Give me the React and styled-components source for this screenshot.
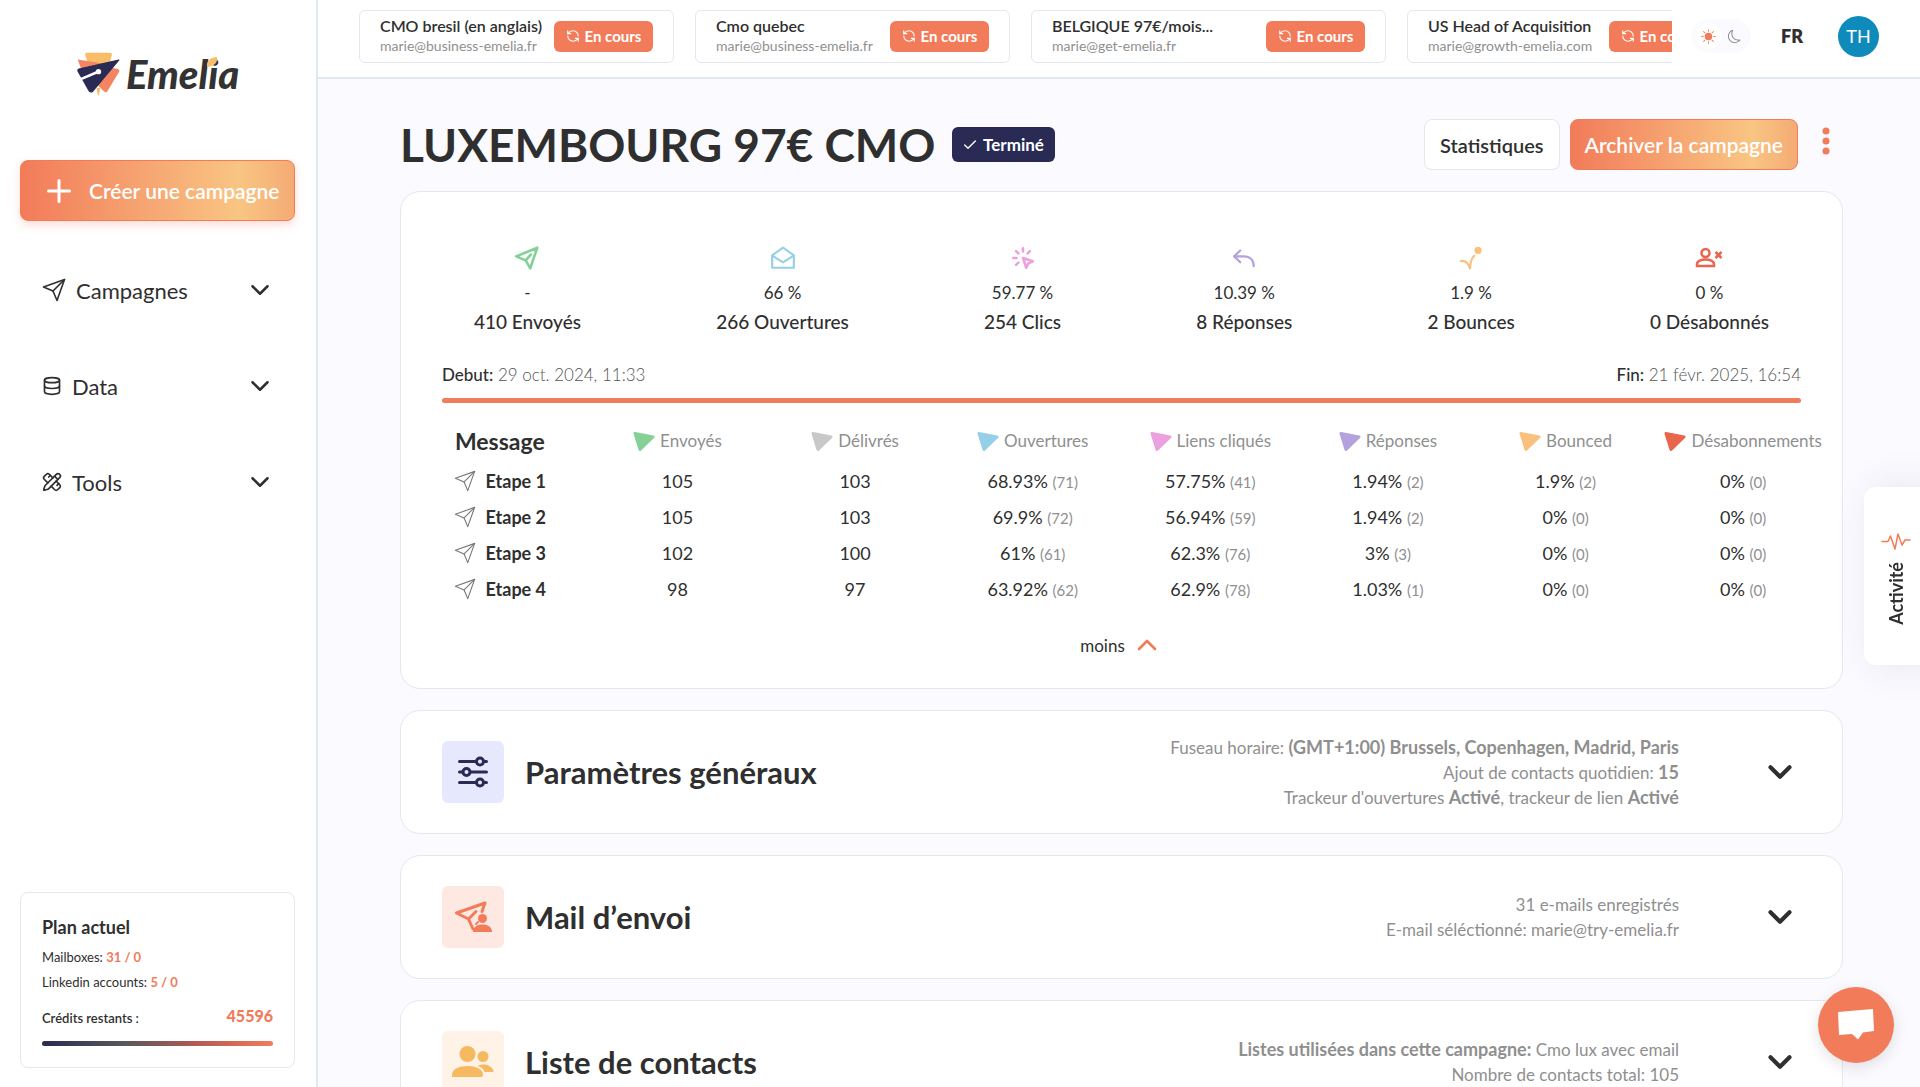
import React from "react";
import styled, { createGlobalStyle } from "styled-components";
import { LuCheck, LuChevronDown, LuChevronUp, LuDatabase, LuPencilRuler, LuPlus, LuRefreshCcw } from "react-icons/lu";
import { TbClick } from "react-icons/tb";
import { BsMoon, BsSunFill } from "react-icons/bs";

const colors = {
  orange: "#f27b5a",
  navy: "#292b54",
  text: "#2f2f2f",
  grey: "#8f8f8f",
  border: "#e2e8f0",
  background: "#fafaff",
};

const GlobalStyle = createGlobalStyle`
  * {
    box-sizing: border-box;
  }

  body {
    margin: 0;
    color: ${colors.text};
    background: ${colors.background};
    font-family: Lato, "Open Sans", sans-serif;
  }

  button {
    font-family: inherit;
    color: inherit;
    cursor: pointer;
  }

  h1, h2, p {
    margin: 0;
  }

  svg {
    display: block;
    flex-shrink: 0;
  }
`;

const Layout = styled.div`
  display: flex;
  height: 100vh;
  overflow: hidden;
`;

/* Sidebar */

const Sidebar = styled.aside`
  display: flex;
  flex-direction: column;
  flex-shrink: 0;
  width: 318px;
  padding: 46px 21px 19px 20px;
  background: white;
  border-right: 2px solid ${colors.border};
`;

const Brand = styled.a`
  display: flex;
  align-items: center;
  gap: 6px;
  height: 56px;
  padding-left: 57px;
  color: #333;
  text-decoration: none;
`;

const BrandName = styled.span`
  position: relative;
  font-size: 40px;
  line-height: 56px;
  font-weight: 900;
  font-style: italic;
`;

const Leaf = styled.svg`
  position: absolute;
  top: 10px;
  right: 21px;
`;

const PrimaryButton = styled.button`
  display: flex;
  align-items: center;
  color: white;
  font-weight: 600;
  border: 1px solid ${colors.orange};
  border-radius: 8px;
  background: linear-gradient(90deg, #f27b5a 0%, #f9c583 80%, #f4ab74 100%);
`;

const CreateButton = styled(PrimaryButton)`
  gap: 12px;
  height: 61px;
  margin-top: 58px;
  padding: 0 16px 0 20px;
  font-size: 21px;
  white-space: nowrap;
  box-shadow: 0 4px 8px rgba(242, 123, 90, 0.25);
`;

const Nav = styled.nav`
  display: flex;
  flex-direction: column;
  gap: 48px;
  margin-top: 45px;
`;

const NavItem = styled.button`
  display: flex;
  align-items: center;
  gap: 10px;
  height: 48px;
  padding: 0 20px 0 22px;
  font-size: 22px;
  text-align: left;
  border: none;
  background: none;
`;

const NavLabel = styled.span`
  flex: 1;
`;

const Plan = styled.section`
  margin-top: auto;
  padding: 22px 21px 20px;
  border: 1px solid ${colors.border};
  border-radius: 8px;
`;

const PlanTitle = styled.h2`
  margin-bottom: 6px;
  font-size: 18px;
  line-height: 24px;
  font-weight: 700;
`;

const PlanLine = styled.p`
  font-size: 13px;
  line-height: 25px;

  strong {
    color: ${colors.orange};
  }
`;

const Credits = styled.div`
  display: flex;
  justify-content: space-between;
  margin-top: 9px;
  font-size: 13px;
  line-height: 28px;
  font-weight: 600;

  strong {
    color: ${colors.orange};
    font-size: 16px;
    line-height: 24px;
  }
`;

const CreditsBar = styled.div`
  height: 5px;
  margin-top: 9px;
  margin-bottom: 1px;
  border-radius: 3px;
  background: linear-gradient(90deg, ${colors.navy}, #58565b 35%, #ad5a54 65%, ${colors.orange});
`;

/* Top bar */

const Content = styled.div`
  display: flex;
  flex: 1;
  flex-direction: column;
  min-width: 0;
`;

const Header = styled.header`
  display: flex;
  align-items: center;
  flex-shrink: 0;
  height: 79px;
  padding: 0 41px 5px;
  background: white;
  border-bottom: 2px solid ${colors.border};
`;

const CampaignList = styled.div`
  display: flex;
  flex: 1;
  gap: 21px;
  min-width: 0;
  overflow: hidden;
`;

const CampaignCard = styled.article`
  display: flex;
  align-items: center;
  flex-shrink: 0;
  gap: 10px;
  height: 53px;
  padding: 0 20px;
  border: 1px solid ${colors.border};
  border-radius: 6px;
`;

const CampaignText = styled.div`
  width: ${(props) => props.$width}px;
  line-height: 20px;
  white-space: nowrap;
`;

const CampaignName = styled.p`
  font-size: 16px;
  font-weight: 600;
`;

const CampaignMail = styled.p`
  color: ${colors.grey};
  font-size: 14px;
`;

const Badge = styled.span`
  display: inline-flex;
  align-items: center;
  justify-content: center;
  gap: 5px;
  width: 99px;
  height: 31px;
  color: white;
  font-size: 15px;
  font-weight: 700;
  border-radius: 6px;
  background: ${colors.orange};
`;

const DoneBadge = styled(Badge)`
  width: 103px;
  height: 35px;
  font-size: 17px;
  background: ${colors.navy};
`;

const ThemeSwitch = styled.button`
  display: flex;
  align-items: center;
  width: 59px;
  height: 34px;
  margin-left: 20px;
  padding: 4px;
  color: #777;
  border: none;
  border-radius: 17px;
  background: ${colors.background};
`;

const ThemeOption = styled.span`
  display: flex;
  align-items: center;
  justify-content: center;
  width: 26px;
  height: 26px;
  color: ${(props) => (props.$active ? colors.orange : "inherit")};
  border-radius: 50%;
  background: ${(props) => (props.$active ? "white" : "none")};
`;

const Language = styled.button`
  margin: 0 35px 0 30px;
  padding: 0;
  font-size: 18px;
  font-weight: 800;
  border: none;
  background: none;
`;

const Avatar = styled.button`
  width: 41px;
  height: 41px;
  padding: 0;
  color: white;
  font-size: 18px;
  border: none;
  border-radius: 50%;
  background: #0f8bbb;
`;

/* Campaign page */

const Main = styled.main`
  flex: 1;
  padding: 40px 77px 40px 82px;
  overflow-y: auto;
  scrollbar-width: none;
`;

const TitleRow = styled.div`
  display: flex;
  align-items: center;
  height: 51px;
`;

const Title = styled.h1`
  margin-right: 16px;
  font-size: 46px;
  line-height: 51px;
  font-weight: 700;
`;

const Actions = styled.div`
  display: flex;
  gap: 10px;
  margin-left: auto;
`;

const StatsButton = styled.button`
  height: 51px;
  padding: 0 15px;
  font-size: 20px;
  font-weight: 600;
  border: 1px solid ${colors.border};
  border-radius: 8px;
  background: white;
`;

const ArchiveButton = styled(PrimaryButton)`
  height: 51px;
  padding: 0 14px;
  font-size: 21px;
`;

const MenuButton = styled.button`
  width: 35px;
  height: 44px;
  padding: 0 0 0 14px;
  border: none;
  background: none;
`;

const Card = styled.section`
  margin-top: 21px;
  border: 1px solid ${colors.border};
  border-radius: 20px;
  background: white;
`;

const StatsCard = styled(Card)`
  padding: 53px 10px 31px;
`;

const StatList = styled.div`
  display: flex;
  justify-content: space-between;
  padding: 0 63px;
`;

const Stat = styled.div`
  display: flex;
  flex-direction: column;
  align-items: center;
`;

const StatRate = styled.p`
  margin: 10px 0 2px;
  font-size: 17px;
  line-height: 24px;
`;

const StatLabel = styled.p`
  font-size: 19px;
  line-height: 30px;
  font-weight: 500;
`;

const Dates = styled.div`
  display: flex;
  justify-content: space-between;
  margin: 26px 31px 11px;
  color: #555;
  font-size: 17px;
  line-height: 24px;
  font-weight: 300;

  strong {
    color: ${colors.text};
    font-weight: 500;
  }
`;

const Progress = styled.div`
  height: 5px;
  margin: 0 31px 15px;
  border-radius: 3px;
  background: ${colors.orange};
`;

const Steps = styled.table`
  width: 100%;
  table-layout: fixed;
  border-collapse: collapse;
  font-size: 18px;
  text-align: center;

  th,
  td {
    height: 36px;
    padding: 0;
  }
`;

const StepsHead = styled.th`
  && {
    height: 45px;
  }

  color: ${(props) => (props.$main ? colors.text : colors.grey)};
  font-size: ${(props) => (props.$main ? 23 : 17)}px;
  font-weight: ${(props) => (props.$main ? 700 : 400)};
`;

const CellContent = styled.span`
  display: flex;
  align-items: center;
  justify-content: center;
  gap: ${(props) => props.$gap}px;
  white-space: nowrap;
`;

const Count = styled.span`
  color: ${colors.grey};
  font-size: 15px;
`;

const LessButton = styled.button`
  display: flex;
  align-items: center;
  gap: 6px;
  height: 24px;
  margin: 26px auto 0;
  padding: 0;
  font-size: 17px;
  border: none;
  background: none;
`;

const Panel = styled(Card)`
  display: flex;
  align-items: center;
  min-height: 124px;
  padding: 0 45px 0 41px;
`;

const PanelIcon = styled.div`
  display: flex;
  align-items: center;
  justify-content: center;
  width: 62px;
  height: 62px;
  margin-right: 21px;
  border-radius: 6px;
  background: ${(props) => props.$background};
`;

const PanelTitle = styled.h2`
  font-size: 31px;
  line-height: 40px;
  font-weight: 700;
`;

const PanelInfo = styled.div`
  flex: 1;
  color: ${colors.grey};
  font-size: 17px;
  line-height: 25px;
  text-align: right;

  strong {
    font-size: 18px;
  }
`;

const PanelToggle = styled.button`
  display: flex;
  align-items: center;
  justify-content: center;
  width: 34px;
  height: 34px;
  margin-left: 84px;
  padding: 0;
  border: none;
  background: none;
`;

/* Floating items */

const ActivityTab = styled.button`
  position: fixed;
  top: 487px;
  right: 0;
  display: flex;
  flex-direction: column;
  align-items: center;
  justify-content: center;
  gap: 12px;
  width: 56px;
  height: 178px;
  padding: 6px 0 0 8px;
  font-size: 18px;
  font-weight: 700;
  border: none;
  border-radius: 12px 0 0 12px;
  background: white;
  box-shadow: 10px 0 40px rgba(60, 60, 110, 0.12);
`;

const ActivityLabel = styled.span`
  writing-mode: vertical-rl;
  transform: rotate(180deg);
`;

const ChatButton = styled.button`
  position: fixed;
  right: 26px;
  bottom: 24px;
  display: flex;
  align-items: center;
  justify-content: center;
  width: 76px;
  height: 76px;
  padding: 0;
  border: none;
  border-radius: 50%;
  background: ${colors.orange};
  box-shadow: 0 4px 16px rgba(0, 0, 0, 0.12);
`;

/* Icons */

const LineIcon = ({ size = 24, color = "currentColor", width = 2, children }) => (
  <svg
    width={size}
    height={size}
    viewBox="0 0 24 24"
    fill="none"
    stroke={color}
    strokeWidth={width}
    strokeLinecap="round"
    strokeLinejoin="round"
  >
    {children}
  </svg>
);

const PlaneIcon = (props) => (
  <LineIcon {...props}>
    <path d="M1.5 9 22.5 1.5 15 22.5 11 13Z" />
    <path d="M11 13 22.5 1.5" />
  </LineIcon>
);

const SentIcon = () => (
  <LineIcon size={26} color="#83d195" width={2.4}>
    <path d="M2 10.5 21.5 2.500 15 21.500 10.8 14.2Z" />
    <path d="M10.8 14.2 15.5 8.8" />
  </LineIcon>
);

const OpenIcon = () => (
  <LineIcon size={26} color="#96d0e8" width={2}>
    <path d="M2 9.500 12 2.500l10 7V21H2Z" />
    <path d="m2.500 10 9.500 6 9.500-6" />
  </LineIcon>
);

const ReplyIcon = () => (
  <LineIcon size={26} color="#b3a2dc" width={2}>
    <path d="M8.500 5 3 10.500l5.500 5.500" />
    <path d="M3 10.500h9c5.500 0 9 3.500 9 9" />
  </LineIcon>
);

const BounceIcon = () => (
  <LineIcon size={26} color="#fac07d" width={2}>
    <path d="M2.500 15c3.500-1 6.500 1 8.500 6.500 .300-5 1.500-9 4-11.500" />
    <circle cx="18.500" cy="5" r="2.300" fill="#fac07d" />
  </LineIcon>
);

const UnsubscribeIcon = () => (
  <svg width="28" height="26" viewBox="0 0 28 26" fill="none" stroke="#e9654b" strokeWidth="2.500">
    <circle cx="10.500" cy="8" r="4" />
    <path d="M2 21v-2c0-3 4.500-4.500 8.500-4.500S19 16 19 19v2Z" />
    <path d="m20.500 7 6 6m0-6-6 6" />
  </svg>
);

const Marker = ({ color }) => (
  <svg width="22" height="20" viewBox="0 0 22 20">
    <path
      d="M2 2.500 20 6 7 18.500Z"
      fill={color}
      stroke={color}
      strokeWidth="3"
      strokeLinejoin="round"
    />
  </svg>
);

const SettingsIcon = () => (
  <svg width="32" height="32" viewBox="0 0 32 32" fill="#e6e9fe" stroke={colors.navy} strokeWidth="3" strokeLinecap="round">
    <path d="M2.500 5.500h27M2.500 16h27M2.500 26.500h27" />
    <circle cx="23" cy="5.500" r="3.500" />
    <circle cx="9.500" cy="16" r="3.500" />
    <circle cx="23" cy="26.500" r="3.500" />
  </svg>
);

const SenderIcon = () => (
  <svg width="38" height="34" viewBox="0 0 38 34" fill="none" stroke={colors.orange} strokeWidth="3" strokeLinecap="round" strokeLinejoin="round">
    <path d="M28 11.500 31 3 2.500 13l12 6 4.500 10" />
    <path d="m14.500 19 7.500-7.500" />
    <circle cx="28.500" cy="18.500" r="4.500" fill={colors.orange} stroke="none" />
    <path d="M19 32c0-5 4-7.500 9.500-7.500S38 27 38 32Z" fill={colors.orange} stroke="none" />
    <path d="m22 24 2-2" strokeWidth="2" />
  </svg>
);

const ContactsIcon = () => (
  <svg width="42" height="32" viewBox="0 0 42 32" fill="#f7b960">
    <circle cx="15.500" cy="8" r="8" />
    <path d="M0 31v-2c0-6 7-9 15.500-9S31 23 31 29v1l-2 1Z" />
    <circle cx="31" cy="10.500" r="5.500" />
    <path d="M26 20c3-2 9-2 12 .500 2.500 1.500 3.500 3 3.500 5.500h-9c-1-3-3-4.800-6.500-6Z" />
  </svg>
);

const PulseIcon = () => (
  <svg width="30" height="17" viewBox="0 0 30 17" fill="none" stroke={colors.orange} strokeWidth="1.500" strokeLinecap="round" strokeLinejoin="round">
    <path d="M1 8.500h6L9.500 3l4.500 13L17 1l4 11 3-5h5" />
  </svg>
);

const BrandMark = () => (
  <svg width="43" height="44" viewBox="232 164 130 132">
    <path d="M262 166h70q7 0 5 7l-8 30h-62l-10-29q-2-8 5-8Z" fill="#f9bd68" />
    <path d="m234 186 76 12-64 20Z" fill="#f58562" />
    <path d="m338 211 17 4q7 2 4 9l-35 58q-4 6-10 1l-20-20Z" fill="#f58562" />
    <path d="M291 272h12l-5 22h-3Z" fill="#f9bd68" />
    <path
      d="M358 188 238 215q-4 2-3 6l34 60q5 6 10 1Z"
      fill="#292b54"
      stroke="#292b54"
      strokeWidth="4"
      strokeLinejoin="round"
    />
    <path d="m240 247 56-24" stroke="white" strokeWidth="8" />
    <circle cx="297" cy="223" r="8" fill="white" />
  </svg>
);

/* Data */

const navItems = [
  { label: "Campagnes", icon: <PlaneIcon size={24} width={1.6} /> },
  { label: "Data", icon: <LuDatabase size={20} /> },
  { label: "Tools", icon: <LuPencilRuler size={20} /> },
];

const campaigns = [
  { name: "CMO bresil (en anglais)", mail: "marie@business-emelia.fr", width: 164 },
  { name: "Cmo quebec", mail: "marie@business-emelia.fr", width: 164 },
  { name: "BELGIQUE 97€/mois...", mail: "marie@get-emelia.fr", width: 204 },
  { name: "US Head of Acquisition", mail: "marie@growth-emelia.com", width: 171 },
];

const stats = [
  { icon: <SentIcon />, rate: "-", label: "410 Envoyés" },
  { icon: <OpenIcon />, rate: "66 %", label: "266 Ouvertures" },
  { icon: <TbClick size={26} color="#eca1df" strokeWidth={2.4} />, rate: "59.77 %", label: "254 Clics" },
  { icon: <ReplyIcon />, rate: "10.39 %", label: "8 Réponses" },
  { icon: <BounceIcon />, rate: "1.9 %", label: "2 Bounces" },
  { icon: <UnsubscribeIcon />, rate: "0 %", label: "0 Désabonnés" },
];

const columns = [
  { label: "Envoyés", color: "#83d195" },
  { label: "Délivrés", color: "#c8c8c8" },
  { label: "Ouvertures", color: "#96d0e8" },
  { label: "Liens cliqués", color: "#eca1df" },
  { label: "Réponses", color: "#b3a2dc" },
  { label: "Bounced", color: "#fac07d" },
  { label: "Désabonnements", color: "#e9654b" },
];

const steps = [
  [["105"], ["103"], ["68.93%", 71], ["57.75%", 41], ["1.94%", 2], ["1.9%", 2], ["0%", 0]],
  [["105"], ["103"], ["69.9%", 72], ["56.94%", 59], ["1.94%", 2], ["0%", 0], ["0%", 0]],
  [["102"], ["100"], ["61%", 61], ["62.3%", 76], ["3%", 3], ["0%", 0], ["0%", 0]],
  [["98"], ["97"], ["63.92%", 62], ["62.9%", 78], ["1.03%", 1], ["0%", 0], ["0%", 0]],
];

const panels = [
  {
    title: "Paramètres généraux",
    icon: <SettingsIcon />,
    background: "#e6e9fe",
    info: (
      <>
        <p>Fuseau horaire: <strong>(GMT+1:00) Brussels, Copenhagen, Madrid, Paris</strong></p>
        <p>Ajout de contacts quotidien: <strong>15</strong></p>
        <p>Trackeur d'ouvertures <strong>Activé</strong>, trackeur de lien <strong>Activé</strong></p>
      </>
    ),
  },
  {
    title: "Mail d’envoi",
    icon: <SenderIcon />,
    background: "#fee8e2",
    info: (
      <>
        <p>31 e-mails enregistrés</p>
        <p>E-mail séléctionné: marie@try-emelia.fr</p>
      </>
    ),
  },
  {
    title: "Liste de contacts",
    icon: <ContactsIcon />,
    background: "#fff2e6",
    info: (
      <>
        <p><strong>Listes utilisées dans cette campagne:</strong> Cmo lux avec email</p>
        <p>Nombre de contacts total: 105</p>
      </>
    ),
  },
];

const App = () => (
  <>
    <GlobalStyle />
    <Layout>
      <Sidebar>
        <Brand href="#">
          <BrandMark />
          <BrandName>
            Emelia
            <Leaf width="12" height="12" viewBox="0 0 12 12">
              <path d="M1 11C0 5 5 1 11 1c1 6-3 9-10 10Z" fill="#f9bd68" />
            </Leaf>
          </BrandName>
        </Brand>
        <CreateButton>
          <LuPlus size={36} strokeWidth={2} />
          Créer une campagne
        </CreateButton>
        <Nav>
          {navItems.map((item) => (
            <NavItem key={item.label}>
              {item.icon}
              <NavLabel>{item.label}</NavLabel>
              <LuChevronDown size={30} />
            </NavItem>
          ))}
        </Nav>
        <Plan>
          <PlanTitle>Plan actuel</PlanTitle>
          <PlanLine>Mailboxes: <strong>31 / 0</strong></PlanLine>
          <PlanLine>Linkedin accounts: <strong>5 / 0</strong></PlanLine>
          <Credits>
            <span>Crédits restants :</span>
            <strong>45596</strong>
          </Credits>
          <CreditsBar />
        </Plan>
      </Sidebar>

      <Content>
        <Header>
          <CampaignList>
            {campaigns.map((campaign) => (
              <CampaignCard key={campaign.name}>
                <CampaignText $width={campaign.width}>
                  <CampaignName>{campaign.name}</CampaignName>
                  <CampaignMail>{campaign.mail}</CampaignMail>
                </CampaignText>
                <Badge>
                  <LuRefreshCcw size={14} />
                  En cours
                </Badge>
              </CampaignCard>
            ))}
          </CampaignList>
          <ThemeSwitch aria-label="Thème">
            <ThemeOption $active>
              <BsSunFill size={15} />
            </ThemeOption>
            <ThemeOption>
              <BsMoon size={13} />
            </ThemeOption>
          </ThemeSwitch>
          <Language>FR</Language>
          <Avatar>TH</Avatar>
        </Header>

        <Main>
          <TitleRow>
            <Title>LUXEMBOURG 97€ CMO</Title>
            <DoneBadge>
              <LuCheck size={16} />
              Terminé
            </DoneBadge>
            <Actions>
              <StatsButton>Statistiques</StatsButton>
              <ArchiveButton>Archiver la campagne</ArchiveButton>
              <MenuButton aria-label="Menu">
                <svg width="8" height="28" viewBox="0 0 8 28" fill={colors.orange}>
                  <circle cx="4" cy="4" r="3.500" />
                  <circle cx="4" cy="14" r="3.500" />
                  <circle cx="4" cy="24" r="3.500" />
                </svg>
              </MenuButton>
            </Actions>
          </TitleRow>

          <StatsCard>
            <StatList>
              {stats.map((stat) => (
                <Stat key={stat.label}>
                  {stat.icon}
                  <StatRate>{stat.rate}</StatRate>
                  <StatLabel>{stat.label}</StatLabel>
                </Stat>
              ))}
            </StatList>
            <Dates>
              <span><strong>Debut:</strong> 29 oct. 2024, 11:33</span>
              <span><strong>Fin:</strong> 21 févr. 2025, 16:54</span>
            </Dates>
            <Progress />
            <Steps>
              <thead>
                <tr>
                  <StepsHead $main>Message</StepsHead>
                  {columns.map((column) => (
                    <StepsHead key={column.label}>
                      <CellContent $gap={5}>
                        <Marker color={column.color} />
                        {column.label}
                      </CellContent>
                    </StepsHead>
                  ))}
                </tr>
              </thead>
              <tbody>
                {steps.map((cells, index) => (
                  <tr key={index}>
                    <th scope="row">
                      <CellContent $gap={10}>
                        <PlaneIcon size={22} color="#777" width={1.2} />
                        Etape {index + 1}
                      </CellContent>
                    </th>
                    {cells.map(([value, count], i) => (
                      <td key={i}>
                        {value} {count !== undefined && <Count>({count})</Count>}
                      </td>
                    ))}
                  </tr>
                ))}
              </tbody>
            </Steps>
            <LessButton>
              moins
              <LuChevronUp size={32} color={colors.orange} strokeWidth={2} />
            </LessButton>
          </StatsCard>

          {panels.map((panel) => (
            <Panel key={panel.title}>
              <PanelIcon $background={panel.background}>{panel.icon}</PanelIcon>
              <PanelTitle>{panel.title}</PanelTitle>
              <PanelInfo>{panel.info}</PanelInfo>
              <PanelToggle aria-label={panel.title}>
                <LuChevronDown size={38} strokeWidth={2.6} />
              </PanelToggle>
            </Panel>
          ))}
        </Main>
      </Content>
    </Layout>

    <ActivityTab>
      <PulseIcon />
      <ActivityLabel>Activité</ActivityLabel>
    </ActivityTab>
    <ChatButton aria-label="Chat">
      <svg width="38" height="34" viewBox="0 0 38 34" fill="white">
        <path d="M1 4 36 1l1 22-11 1.500-5 7-6-5.500-13 1Z" />
      </svg>
    </ChatButton>
  </>
);

export default App;
